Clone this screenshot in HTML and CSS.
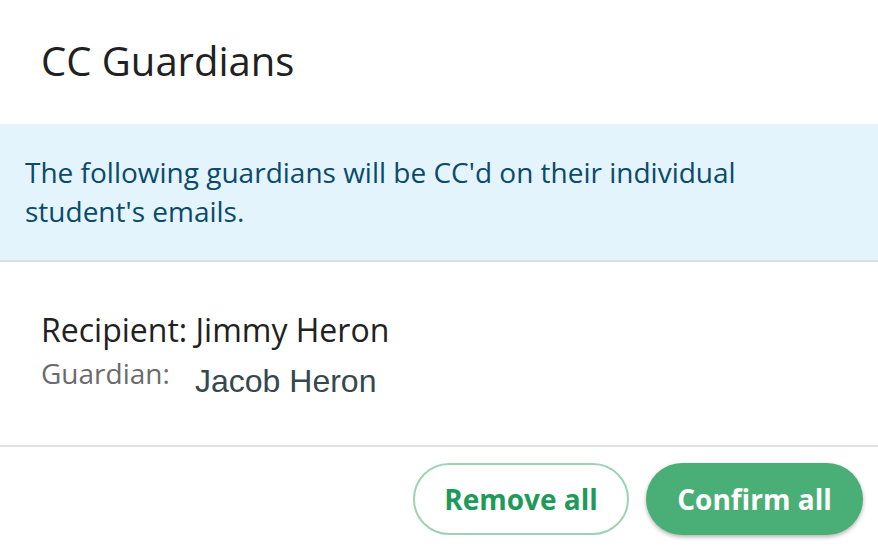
FILE: index.html
```html
<!DOCTYPE html>
<html>
<head>
<meta charset="utf-8">
<link rel="stylesheet" href="styles.css">
</head>
<body>
<div class="modal">
  <header class="modal-header">
    <h1 class="title">CC Guardians</h1>
  </header>
  <div class="info">
    <p>The following guardians will be CC'd on their individual<br>student's emails.</p>
  </div>
  <div class="recipients">
    <div class="recipient">Recipient: Jimmy Heron</div>
    <div class="guardian-row">
      <span class="guardian-label">Guardian:</span>
      <span class="guardian-name">Jacob Heron</span>
    </div>
  </div>
  <footer class="modal-footer">
    <button class="btn btn-outline">Remove all</button>
    <button class="btn btn-primary">Confirm all</button>
  </footer>
</div>
</body>
</html>
```
FILE: styles.css
```css
* { box-sizing: border-box; }
html, body { margin: 0; padding: 0; background: #fff; }
body { font-family: "Open Sans", "Noto Sans", sans-serif; width: 878px; height: 552px; overflow: hidden; }
.modal { display: flex; flex-direction: column; }
.modal-header { height: 124px; padding: 34px 41px 0; }
.title { margin: 0; font-size: 40px; font-weight: 400; color: #212121; line-height: 54px; }
.info { background: #e3f4fc; padding: 29px 25px 0; border-bottom: 2px solid #dedede; height: 138px; }
.info p { margin: 0; font-size: 28px; line-height: 39px; color: #0c4a6b; }
.recipients { height: 185px; padding: 48px 41px 0; border-bottom: 2px solid #e0e0e0; }
.recipient { font-size: 32px; line-height: 40px; color: #212121; }
.guardian-row { display: flex; align-items: flex-start; margin-top: 3px; }
.guardian-label { font-size: 28px; line-height: 40px; color: #6b6b6b; width: 154px; }
.guardian-name { font-family: "Liberation Sans", Arial, sans-serif; font-size: 32px; line-height: 40px; color: #37474f; margin-top: 8px; }
.modal-footer { display: flex; justify-content: flex-end; gap: 17px; padding: 16px 15px 0; }
.btn { height: 72px; border-radius: 36px; font-family: "Open Sans", sans-serif; font-weight: 700; font-size: 28px; padding: 0; cursor: pointer; }
.btn-outline { width: 216px; background: #fff; border: 2px solid #9dd3b3; color: #1e9a5a; }
.btn-primary { width: 217px; background: #4aae77; border: none; color: #fff; box-shadow: 0 2px 4px rgba(0,0,0,0.3); }
```
